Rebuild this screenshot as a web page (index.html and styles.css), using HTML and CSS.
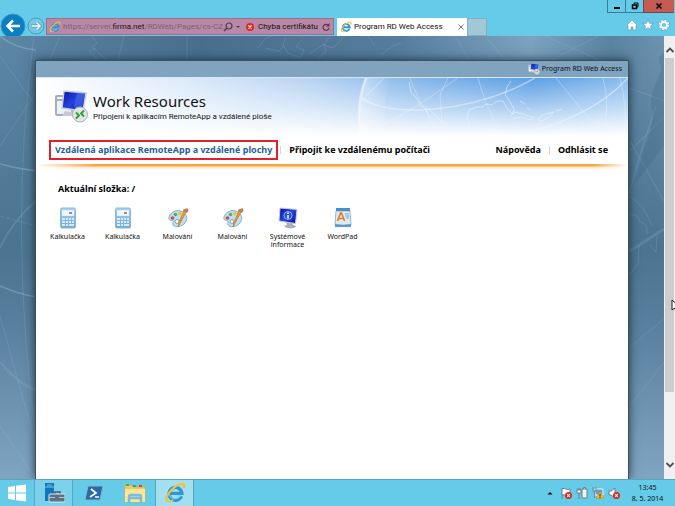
FILE: index.html
```html
<!DOCTYPE html>
<html lang="cs">
<head>
    <meta charset="UTF-8">
    <meta name="viewport" content="width=device-width, initial-scale=1.0">
    <title>Program RD Web Access</title>
    <link rel="stylesheet" href="styles.css">
</head>
<body>
    <!-- Shared icons -->
    <svg class="defs" aria-hidden="true">
        <defs>
            <linearGradient id="screen" x1="0" y1="0" x2="1" y2="1">
                <stop offset="0" stop-color="#0a12a8"/>
                <stop offset=".5" stop-color="#2444dc"/>
                <stop offset="1" stop-color="#0c149c"/>
            </linearGradient>
            <linearGradient id="calc" x1="0" y1="0" x2="0" y2="1">
                <stop offset="0" stop-color="#a9d3ee"/>
                <stop offset="1" stop-color="#6fa9d4"/>
            </linearGradient>
            <symbol id="ie" viewBox="0 0 24 24">
                <path d="M19 15.500A7 7 0 1 1 19.500 12.500H7" fill="none" stroke="#2c96dc" stroke-width="3.600"/>
                <path d="M18 14.500A6.500 6.500 0 0 1 6 14" fill="none" stroke="#7ccdf5" stroke-width="1.200"/>
                <path d="M4 21C-1 18 9 5 18 2.500c4-1 5 1 3.500 4.500" fill="none" stroke="#f4c32c" stroke-width="2.400"/>
                <path d="M4 21c2 1 4 0 6-1.500" fill="none" stroke="#f4c32c" stroke-width="2"/>
            </symbol>
            <symbol id="rd" viewBox="0 0 34 34">
                <rect x="1" y="6" width="16" height="19" rx="1" fill="#eef1f5" stroke="#a5aebb" stroke-width="2"/>
                <path d="M2 10h6" stroke="#a5aebb" stroke-width="2"/>
                <path d="M9 1l22 2-3 18-21-3z" fill="url(#screen)" stroke="#c9d0dc" stroke-width="1.500"/>
                <path d="M22 2.500l8 1-3 16-8-2z" fill="#5675f0" opacity=".5"/>
                <path d="M10 21l8 1v4H7z" fill="#c7cbd1"/>
                <circle cx="25" cy="24.500" r="7.500" fill="#e3e5e7" stroke="#aeb3b8"/>
                <path d="M21 22.500l3 3-3 3M29 20.500l-3 3 3 3" fill="none" stroke="#23a12c" stroke-width="1.800"/>
            </symbol>
            <symbol id="calculator" viewBox="0 0 20 22">
                <rect x="2.500" y="1" width="15" height="20" rx="1.500" fill="url(#calc)" stroke="#8bb5d4"/>
                <rect x="4.500" y="3.500" width="11" height="5" fill="#eef6fa" stroke="#e4f0f7"/>
                <path d="M11 5h3v2h-3z" fill="#b58b5e"/>
                <path d="M4 11h3v2H4zM8 11h2v2H8zM11 11h2v2h-2zM14 11h2v2h-2zM4 14h3v2H4zM8 14h2v2H8zM11 14h2v2h-2zM14 14h2v2h-2zM4 17h3v2H4zM8 17h2v2H8zM11 17h5v2h-5z" fill="#d8ecf8"/>
            </symbol>
            <symbol id="paint" viewBox="0 0 22 22">
                <path d="M2 10C4 4 11 2 16 5c4 2 5 7 2 11-3 4-10 5-12 2-1-2 1-3 0-4s-5 0-4-4z" fill="#bddff2" stroke="#7fb2d3"/>
                <circle cx="5.500" cy="11" r="1.800" fill="#d9473e"/>
                <circle cx="8.500" cy="7.500" r="1.800" fill="#5bb052"/>
                <circle cx="13" cy="6.500" r="1.700" fill="#f1bf3a"/>
                <circle cx="10" cy="14.500" r="2" fill="#fff" stroke="#70a7cb"/>
                <path d="M19 5l-8 15 1-5 5-11z" fill="#eb9e3c" stroke="#c97824" stroke-width=".8"/>
                <path d="M16 4c0-3 3-1 4-3 2 1 2 4-1 5z" fill="#b98254"/>
            </symbol>
            <symbol id="sysinfo" viewBox="0 0 22 22">
                <path d="M9 14h6l1 4 3 1c0 3-10 3-12 0l3-1z" fill="#a8adb6"/>
                <path d="M3 1l17 1.500-1.500 14L2 14z" fill="url(#screen)" stroke="#c5cedd"/>
                <circle cx="11" cy="8.500" r="4" fill="#244fd5" stroke="#b8ccff" stroke-width=".8"/>
                <path d="M11 8v3.500M11 5.500V7" stroke="#fff" stroke-width="1.500"/>
            </symbol>
            <symbol id="wordpad" viewBox="0 0 20 22">
                <path d="M3 4h14l1 14H2z" fill="#dcecf7" stroke="#95b9d4"/>
                <path d="M3 1h14v3H3z" fill="#4c8dc2"/>
                <path d="M2 17l8 1 8-1v3H2z" fill="#5c9acb"/>
                <path d="M4.500 14l3-8h1l3 8M6 11.500h4" fill="none" stroke="#e8761f" stroke-width="1.600"/>
                <path d="M12 7h4M12 9h4M13 11h3" stroke="#74a8d3"/>
            </symbol>
            <symbol id="error" viewBox="0 0 8 8">
                <circle cx="4" cy="4" r="4" fill="#dc2b20"/>
                <path d="M2.500 2.500l3 3M5.500 2.500l-3 3" stroke="#fff" stroke-width="1.200"/>
            </symbol>
        </defs>
    </svg>

    <!-- Browser frame -->
    <header class="browser-bar">
        <button class="back" aria-label="Zpět">
            <svg viewBox="0 0 26 26"><circle cx="13" cy="13" r="12" fill="#0b7fc1" stroke="#3b9bcb"/><path d="M20 13H8M13 7.500L7.500 13l5.500 5.500" fill="none" stroke="#fff" stroke-width="2.500"/></svg>
        </button>
        <button class="forward" aria-label="Vpřed">
            <svg viewBox="0 0 18 18"><circle cx="9" cy="9" r="8" fill="#74c8e6" stroke="#4a9dbb"/><path d="M4 9h9M9.500 5.500L13 9l-3.500 3.500" fill="none" stroke="#4a9dbb" stroke-width="3"/><path d="M4.500 9H13M9.500 5.500L13 9l-3.500 3.500" fill="none" stroke="#fff" stroke-width="1.500"/></svg>
        </button>
        <div class="address">
            <svg class="small-icon"><use href="#ie"/></svg>
            <a class="url" href="#">https://server.<b>firma.net</b>/RDWeb/Pages/cs-CZ</a>
            <button class="search" aria-label="Hledat">
                <svg viewBox="0 0 18 10"><circle cx="6" cy="4" r="3" fill="none" stroke="#54394c" stroke-width="1.200"/><path d="M4 6L1 9" stroke="#54394c" stroke-width="1.600"/><path d="M13 4h4l-2 2z" fill="#54394c"/></svg>
            </button>
            <svg class="error-icon"><use href="#error"/></svg>
            <span class="cert">Chyba certifikátu</span>
            <button class="refresh" aria-label="Aktualizovat">
                <svg viewBox="0 0 8 8"><path d="M6.500 2.500A3 3 0 1 0 7 5" fill="none" stroke="#54394c" stroke-width="1.200"/><path d="M7.500 0v3.500H4z" fill="#54394c"/></svg>
            </button>
        </div>
        <div class="tab">
            <svg class="small-icon"><use href="#ie"/></svg>
            <span>Program RD Web Access</span>
            <button aria-label="Zavřít kartu"><svg viewBox="0 0 6 6"><path d="M.5.5l5 5M5.500.5l-5 5" stroke="#777"/></svg></button>
        </div>
        <button class="new-tab" aria-label="Nová karta"></button>
        <div class="window-side">
            <div class="window-buttons">
                <button aria-label="Minimalizovat"><svg viewBox="0 0 8 8"><path d="M1 5h6v2H1z"/></svg></button>
                <button aria-label="Obnovit"><svg viewBox="0 0 8 8"><path d="M3 2V1h4v4H6" fill="none" stroke="#000" stroke-width="1"/><path d="M1.500 3h4v3.500h-4z" fill="none" stroke="#000" stroke-width="1.500"/></svg></button>
                <button class="close" aria-label="Zavřít"><svg viewBox="0 0 8 8"><path d="M1.500 1.500l5 5M6.500 1.500l-5 5" stroke="#000" stroke-width="1.600"/></svg></button>
            </div>
            <div class="tools">
                <button aria-label="Domů"><svg viewBox="0 0 12 12"><path d="M1 6l5-5 5 5-1 1v4H7V8H5v3H2V7z" fill="#fff" stroke="#5b8fa5" stroke-width=".6"/></svg></button>
                <button aria-label="Oblíbené"><svg viewBox="0 0 12 12"><path d="M6 .8l1.500 3.400 3.800.4-2.800 2.500.8 3.700L6 8.900l-3.300 1.900.8-3.700L.7 4.600l3.800-.4z" fill="#fff" stroke="#5b8fa5" stroke-width=".6"/></svg></button>
                <button aria-label="Nástroje"><svg viewBox="0 0 12 12"><circle cx="6" cy="6" r="4.500" fill="none" stroke="#5b8fa5" stroke-width="2.400" stroke-dasharray="2.100 1.430"/><circle cx="6" cy="6" r="4.400" fill="none" stroke="#fff" stroke-width="1.800" stroke-dasharray="1.800 1.656"/><circle cx="6" cy="6" r="3" fill="none" stroke="#fff" stroke-width="1.800"/></svg></button>
            </div>
        </div>
    </header>

    <div class="viewport">
        <main class="desktop">
            <svg class="globe" viewBox="0 0 664 443" preserveAspectRatio="xMidYMid slice" fill="none" stroke="#a5cae3" aria-hidden="true">
                <g stroke-opacity=".18">
                    <path d="M34 0Q8 190 36 405"/>
                    <path d="M0 110L34 60 60 0M118 24L124 0M187 0v24M0 20L36 70"/>
                    <path d="M0 0Q14 12 36 14M0 128q18 5 36 7M0 250q18 8 36 11" stroke-width="1.500" stroke-opacity=".35"/>
                    <path d="M0 212Q12 185 36 165" stroke-width="2"/>
                    <path d="M0 180l36 10" stroke-dasharray="4 2"/>
                    <path d="M0 326q18 22 36 28" stroke-width="3" stroke-opacity=".15"/>
                    <path d="M0 280l36 130M0 390l36 53"/>
                    <path d="M92 0l5 7-5 4 9 8 6 5M96 12l-7 3 8 8M258 12l8-10 6-2M265 12l14 3 5-5M286 0l-3 9 5 8 12 5 4-8-8-3 6-8M310 18l14-10 2 7-9 9M330 0l-6 9 9 3 12-12M368 0l7 10M381 19l12-9 8-3"/>
                    <path d="M455 0l14 24M485 0l20 24M545 0l54 24M551 24L598 0"/>
                    <path d="M630 52l34 13M630 115l34-34M630 105l34 60M656 70q-24 72-26 88" stroke-width="1.200"/>
                    <path d="M630 215l34-22" stroke-width="3"/>
                    <path d="M630 179q8-2 10 7 8 1 7 12M630 238l8-10 1-19M650 209l6 7 1-16M630 311l34-28M630 370l34-44M630 160q15 10 22 30"/>
                </g>
                <path d="M664 16l-5 5 2 13c-4 14-12 22-9 38s-4 30-9 46l-8 30 29-38z" fill="#35627f" fill-opacity=".25" stroke="none"/>
            </svg>

            <article class="portal">
                <div class="portal-top">
                    <svg class="small-icon"><use href="#rd"/></svg>
                    <span>Program RD Web Access</span>
                </div>
                <div class="banner">
                    <svg class="banner-art" viewBox="0 0 270 62" fill="none" stroke="#fff" aria-hidden="true">
                        <defs>
                            <linearGradient id="fade" gradientUnits="userSpaceOnUse" x1="0" y1="0" x2="0" y2="60">
                                <stop offset="0" stop-color="#fff"/>
                                <stop offset=".6" stop-color="#fff" stop-opacity=".8"/>
                                <stop offset="1" stop-color="#fff" stop-opacity="0"/>
                            </linearGradient>
                            <linearGradient id="haze" x1="0" y1="0" x2="1" y2="0">
                                <stop offset="0" stop-color="#fff" stop-opacity=".4"/>
                                <stop offset="1" stop-color="#fff" stop-opacity="0"/>
                            </linearGradient>
                        </defs>
                        <path d="M8 0Q-2 25 2 62h28Q22 25 34 0z" fill="url(#haze)" stroke="none"/>
                        <g stroke="url(#fade)" stroke-opacity=".3">
                            <path d="M8 0Q-2 25 2 55" stroke-width="2.500" stroke-opacity=".5"/>
                            <path d="M4 20c24 20 110 16 173-20" stroke-width="1.500" stroke-opacity=".45"/>
                            <path d="M270 0q-35 38-100 54" stroke-width="1.500" stroke-opacity=".45"/>
                            <path d="M52 0q14 42 48 62M26 0l-20 20M2 54C40 44 70 20 100 0M90 0l-8 17 3 38M120 0q8 30 25 58M198 0l34 42 38 12M245 0q8 28-1 60M262 0q8 30 4 60"/>
                        </g>
                        <path d="M51 4l2 10 7 8 2 5 6 4 3 9 10 14M110 54l1-9-2-5 2-8 7-3 7 0 3-3 6 1 5-4 6 0 4 7 6 6 1-5-5-9-4-5 2-8 4-6M67 28l9 8 10 10M152 38l5-4 8 2 11 4-3 2-9-3-9 1M180 42l4-5 12-3-5 5-7 4zM198 33l6-2M162 23l5 3M169 30l4 2" stroke="url(#fade)" stroke-opacity=".5" stroke-width="1"/>
                    </svg>
                    <svg class="logo"><use href="#rd"/></svg>
                    <div class="headings">
                        <h1>Work Resources</h1>
                        <p>Připojení k aplikacím RemoteApp a vzdálené ploše</p>
                    </div>
                </div>
                <nav class="portal-nav">
                    <a class="active" href="#">Vzdálená aplikace RemoteApp a vzdálené plochy</a>
                    <a class="connect" href="#">Připojit ke vzdálenému počítači</a>
                    <a class="help" href="#">Nápověda</a>
                    <a class="logout" href="#">Odhlásit se</a>
                </nav>
                <div class="rule"></div>
                <section class="content">
                    <h2>Aktuální složka: /</h2>
                    <div class="apps">
                        <a href="#"><svg><use href="#calculator"/></svg>Kalkulačka</a>
                        <a href="#"><svg><use href="#calculator"/></svg>Kalkulačka</a>
                        <a href="#"><svg><use href="#paint"/></svg>Malování</a>
                        <a href="#"><svg><use href="#paint"/></svg>Malování</a>
                        <a href="#"><svg><use href="#sysinfo"/></svg>Systémové informace</a>
                        <a href="#"><svg><use href="#wordpad"/></svg>WordPad</a>
                    </div>
                </section>
            </article>
        </main>
        <div class="scrollbar">
            <button aria-label="Nahoru"><svg viewBox="0 0 10 10"><path d="M1.500 7L5 3.500 8.500 7" fill="none" stroke="#505050" stroke-width="1.800"/></svg></button>
            <div class="track"><div class="thumb"></div></div>
            <button aria-label="Dolů"><svg viewBox="0 0 10 10"><path d="M1.500 3L5 6.500 8.500 3" fill="none" stroke="#505050" stroke-width="1.800"/></svg></button>
        </div>
        <svg class="cursor" viewBox="0 0 8 13"><path d="M1 1v10l2.500-2L5 12l2-1-1.500-3H9z" fill="#fff" stroke="#222"/></svg>
    </div>

    <!-- Taskbar -->
    <footer class="taskbar">
        <button class="start" aria-label="Start"><svg viewBox="0 0 18 18"><path d="M0 3l7-1v6.500H0zM8 1.800L18 .5v8H8zM0 9.500h7V16l-7-1zM8 9.500h10v8L8 16.200z" fill="#fff"/></svg></button>
        <button class="task running" aria-label="Správce serveru"><svg viewBox="0 0 22 22"><path d="M2 1h9v18H2z" fill="#1177bd"/><path d="M2 5h9M4 3h5" stroke="#80c5ea"/><path d="M12 12v-2h5v2" fill="none" stroke="#46596b" stroke-width="1.500"/><rect x="6" y="12" width="16" height="8" rx="1" fill="#5d7184" stroke="#dce9f1"/><path d="M6 15.500h6M16 15.500h6" stroke="#b9c6d0"/></svg></button>
        <button class="task" aria-label="PowerShell"><svg viewBox="0 0 22 22"><path d="M5 4h15l-3 14H2z" fill="#286ba6" stroke="#83b5d5"/><path d="M8 7l5 4-6 4M12 15h4" fill="none" stroke="#fff" stroke-width="1.700"/></svg></button>
        <button class="task" aria-label="Průzkumník souborů"><svg viewBox="0 0 22 22"><path d="M1 3h6l2 2h12v15H1z" fill="#edcb6a" stroke="#d8af49"/><path d="M2 3h3M9 4h3" stroke="#3cae58" stroke-width="2"/><path d="M15 4h3" stroke="#d9473e" stroke-width="2"/><path d="M1 7h20v13H1z" fill="#fae69a"/><path d="M5 21v-6q0-2 2-2h8q2 0 2 2v6M5 16h12" fill="none" stroke="#7abbe0" stroke-width="2.500"/></svg></button>
        <button class="task current" aria-label="Internet Explorer"><svg><use href="#ie"/></svg></button>
        <div class="tray">
            <svg viewBox="0 0 12 12"><path d="M3.500 7.500L6 5l2.500 2.500z"/></svg>
            <svg viewBox="0 0 12 12"><path d="M2 12V1M2 2c3-2 4 2 8 0v6c-4 2-5-1-8 0" fill="#fff" stroke="#68808b"/><use href="#error" x="5" y="5" width="7" height="7"/></svg>
            <svg viewBox="0 0 12 12"><path d="M6 2h5v9H6zM7.500 2V.5h2V2" fill="#f4f8f8" stroke="#68808b"/><path d="M1 3h4v3H1zM3 6v6M2 1v2M4 1v2" fill="#fff" stroke="#68808b"/></svg>
            <svg viewBox="0 0 12 12"><path d="M3 2h8v6H3z" fill="#5f9fc4" stroke="#eff7f7"/><path d="M1 0v4h3V0M2.500 4v7" fill="none" stroke="#758994"/><path d="M8 4.500l4 7H4z" fill="#f6b921" stroke="#c28a13" stroke-width=".5"/><path d="M8 7v2.500M8 10v1" stroke="#222"/></svg>
            <svg viewBox="0 0 12 12"><path d="M1 4h2l4-3v10L3 8H1z" fill="#fff" stroke="#68808b"/><use href="#error" x="5" y="5" width="7" height="7"/></svg>
        </div>
        <div class="clock"><span>13:45</span><span>8. 5. 2014</span></div>
    </footer>
</body>
</html>
```
FILE: styles.css
```css
* {
    margin: 0;
    padding: 0;
    box-sizing: border-box;
}

body {
    display: flex;
    flex-direction: column;
    height: 100vh;
    overflow: hidden;
    background: #66cae9;
    color: #111;
    font-family: "Noto Sans", "Open Sans", sans-serif;
    font-size: 7px;
    line-height: 8px;
}

svg {
    display: block;
    flex: none;
}

button {
    border: none;
    background: none;
    font: inherit;
    color: inherit;
    cursor: pointer;
}

a {
    color: inherit;
    text-decoration: none;
}

.defs {
    position: absolute;
    width: 0;
    height: 0;
}

.small-icon {
    width: 12px;
    height: 12px;
}

/* Browser frame */
.browser-bar {
    display: flex;
    align-items: flex-end;
    height: 36px;
    flex: none;
    overflow: hidden;
    font-family: Roboto, "Open Sans", sans-serif;
    font-size: 8px;
    line-height: 12px;
}

.back {
    width: 26px;
    height: 23px;
}

.back svg {
    width: 26px;
    height: 26px;
}

.forward {
    width: 18px;
    margin: 0 1px 1px;
}

.forward svg {
    width: 18px;
    height: 18px;
}

.address {
    display: flex;
    align-items: center;
    flex: 0 1 288px;
    min-width: 0;
    height: 17px;
    margin: 0 3px 1px 0;
    padding: 0 3px 0 2px;
    background: #b888a6;
    border: 1px solid #a66a86;
    white-space: nowrap;
}

.url {
    flex: 1;
    margin-left: 2px;
    color: #7c6377;
}

.url b {
    color: #1c1019;
    font-weight: normal;
}

.search svg {
    width: 18px;
    height: 10px;
}

.error-icon {
    width: 8px;
    height: 8px;
    margin: 0 4px 0 5px;
}

.refresh {
    margin-left: 4px;
}

.refresh svg {
    width: 8px;
    height: 8px;
}

.tab {
    display: flex;
    align-items: center;
    flex: 0 1 130px;
    gap: 2px;
    height: 18px;
    padding: 0 3px;
    background: #fff;
    white-space: nowrap;
}

.tab button {
    margin-left: auto;
}

.tab button svg {
    width: 6px;
    height: 6px;
}

.new-tab {
    width: 20px;
    height: 18px;
    background: #a0c9d8;
    border: 1px solid #84aebd;
}

.window-side {
    display: flex;
    flex-direction: column;
    align-self: stretch;
    align-items: flex-end;
    margin-left: auto;
    padding-right: 1px;
}

.window-buttons {
    display: flex;
}

.window-buttons button {
    display: grid;
    place-items: center;
    width: 18px;
    height: 13px;
    border: 1px solid #357c96;
    border-width: 0 0 1px 1px;
}

.window-buttons .close {
    width: 31px;
    background: #c75b52;
    border-color: #6a4650;
}

.window-buttons svg {
    width: 8px;
    height: 8px;
}

.tools {
    display: flex;
    gap: 4px;
    padding: 6px 4px 0 0;
}

.tools svg {
    width: 12px;
    height: 12px;
}

/* Page area */
.viewport {
    position: relative;
    display: flex;
    flex: 1;
    min-height: 0;
}

.desktop {
    position: relative;
    display: flex;
    flex: 1;
    padding: 24px 35px 0;
    overflow: hidden;
    background: linear-gradient(to bottom, rgba(70, 110, 140, 0) 0, #4b7490 48%, #587f9d 65%, #80a5c3 100%), linear-gradient(to right, #5c87a5 0, #486e8c 30%, #567d9b 60%, #7da3c1 80%, #5a839f 92%, #6d94b1 100%);
}

.globe {
    position: absolute;
    inset: 0;
    width: 100%;
    height: 100%;
}

.portal {
    position: relative;
    display: flex;
    flex-direction: column;
    flex: 1;
    background: #fff;
    border: 1px solid #3e4e5a;
    border-bottom: none;
    box-shadow: 0 0 9px rgba(16, 32, 46, 0.8);
}

.portal-top {
    display: flex;
    justify-content: flex-end;
    align-items: center;
    gap: 2px;
    height: 16px;
    padding-right: 6px;
    background: #80a3bf;
}

.banner {
    position: relative;
    display: flex;
    gap: 4px;
    height: 62px;
    padding: 12px 19px 0;
    border-top: 1px solid #d8e8f5;
    background: linear-gradient(to bottom, rgba(255, 255, 255, 0) 0, rgba(255, 255, 255, 0.5) 50%, #fff 95%), linear-gradient(to right, #fff 0, #dceafa 25%, #b9d5f3 45%, #83b5ea 65%, #5b9fe4 84%, #8abcee 100%);
}

.banner-art {
    position: absolute;
    top: 0;
    right: 0;
    width: 270px;
    height: 62px;
}

.logo {
    width: 34px;
    height: 34px;
}

.headings h1 {
    padding-top: 2px;
    font-size: 15px;
    line-height: 18px;
    font-weight: normal;
}

.headings p {
    font-family: Roboto, "Open Sans", sans-serif;
    font-size: 8px;
    line-height: 14px;
}

.portal-nav {
    display: flex;
    align-items: center;
    padding: 1px 20px 0 13px;
    font-size: 9px;
    font-weight: bold;
    line-height: 16px;
    white-space: nowrap;
    color: #000;
}

.portal-nav .active {
    padding: 0 4px;
    border: 2px solid #e31e2d;
    color: #2a6198;
}

.connect,
.logout {
    display: flex;
    align-items: center;
}

.connect::before,
.logout::before {
    content: "";
    width: 1px;
    height: 8px;
    margin: 0 8px 0 2px;
    background: #d5d5d5;
}

.logout::before {
    margin-left: 8px;
}

.help {
    margin-left: auto;
}

.rule {
    height: 6px;
    margin-top: 4px;
    background: linear-gradient(to right, #fff 0, rgba(255, 255, 255, 0) 10%, rgba(255, 255, 255, 0) 94%, #fff 100%), linear-gradient(to bottom, #f9a544 0, #f9a544 33%, #fee3bf 50%, #fff 100%);
}

.content {
    padding: 13px 4px;
}

.content h2 {
    padding-left: 18px;
    font-size: 9px;
    line-height: 12px;
    color: #000;
}

.apps {
    display: flex;
    flex-wrap: wrap;
    margin-top: 12px;
}

.apps a {
    display: flex;
    flex-direction: column;
    align-items: center;
    gap: 4px;
    width: 55px;
    padding: 0 7px;
    text-align: center;
}

.apps svg {
    width: 22px;
    height: 22px;
}

.scrollbar {
    display: flex;
    flex-direction: column;
    width: 11px;
    padding: 9px 0;
    background: #f0f0f0;
}

.scrollbar svg {
    width: 10px;
    height: 10px;
    margin: auto;
}

.track {
    flex: 1;
    padding-top: 3px;
}

.thumb {
    height: 83%;
    margin: 0 1px;
    background: #cdcdcd;
}

.cursor {
    position: absolute;
    top: 263px;
    right: -4px;
    width: 8px;
    height: 13px;
}

/* Taskbar */
.taskbar {
    display: flex;
    align-items: stretch;
    flex: none;
    height: 27px;
    border-top: 1px solid #5aa5be;
}

.taskbar button {
    display: grid;
    place-items: center;
}

.start {
    width: 34px;
}

.start svg {
    width: 18px;
    height: 18px;
}

.task {
    width: 41px;
}

.task svg {
    width: 22px;
    height: 22px;
}

.taskbar .running,
.taskbar .current {
    width: 39px;
    background: #7bd0eb;
    border: 1px solid #55a9c5;
    border-width: 0 1px;
}

.taskbar .current {
    background: #a4dfef;
}

.tray {
    display: flex;
    align-items: center;
    gap: 4px;
    margin-left: auto;
}

.tray svg {
    width: 12px;
    height: 12px;
}

.clock {
    display: flex;
    flex-direction: column;
    justify-content: center;
    gap: 3px;
    width: 55px;
    text-align: center;
}
```
